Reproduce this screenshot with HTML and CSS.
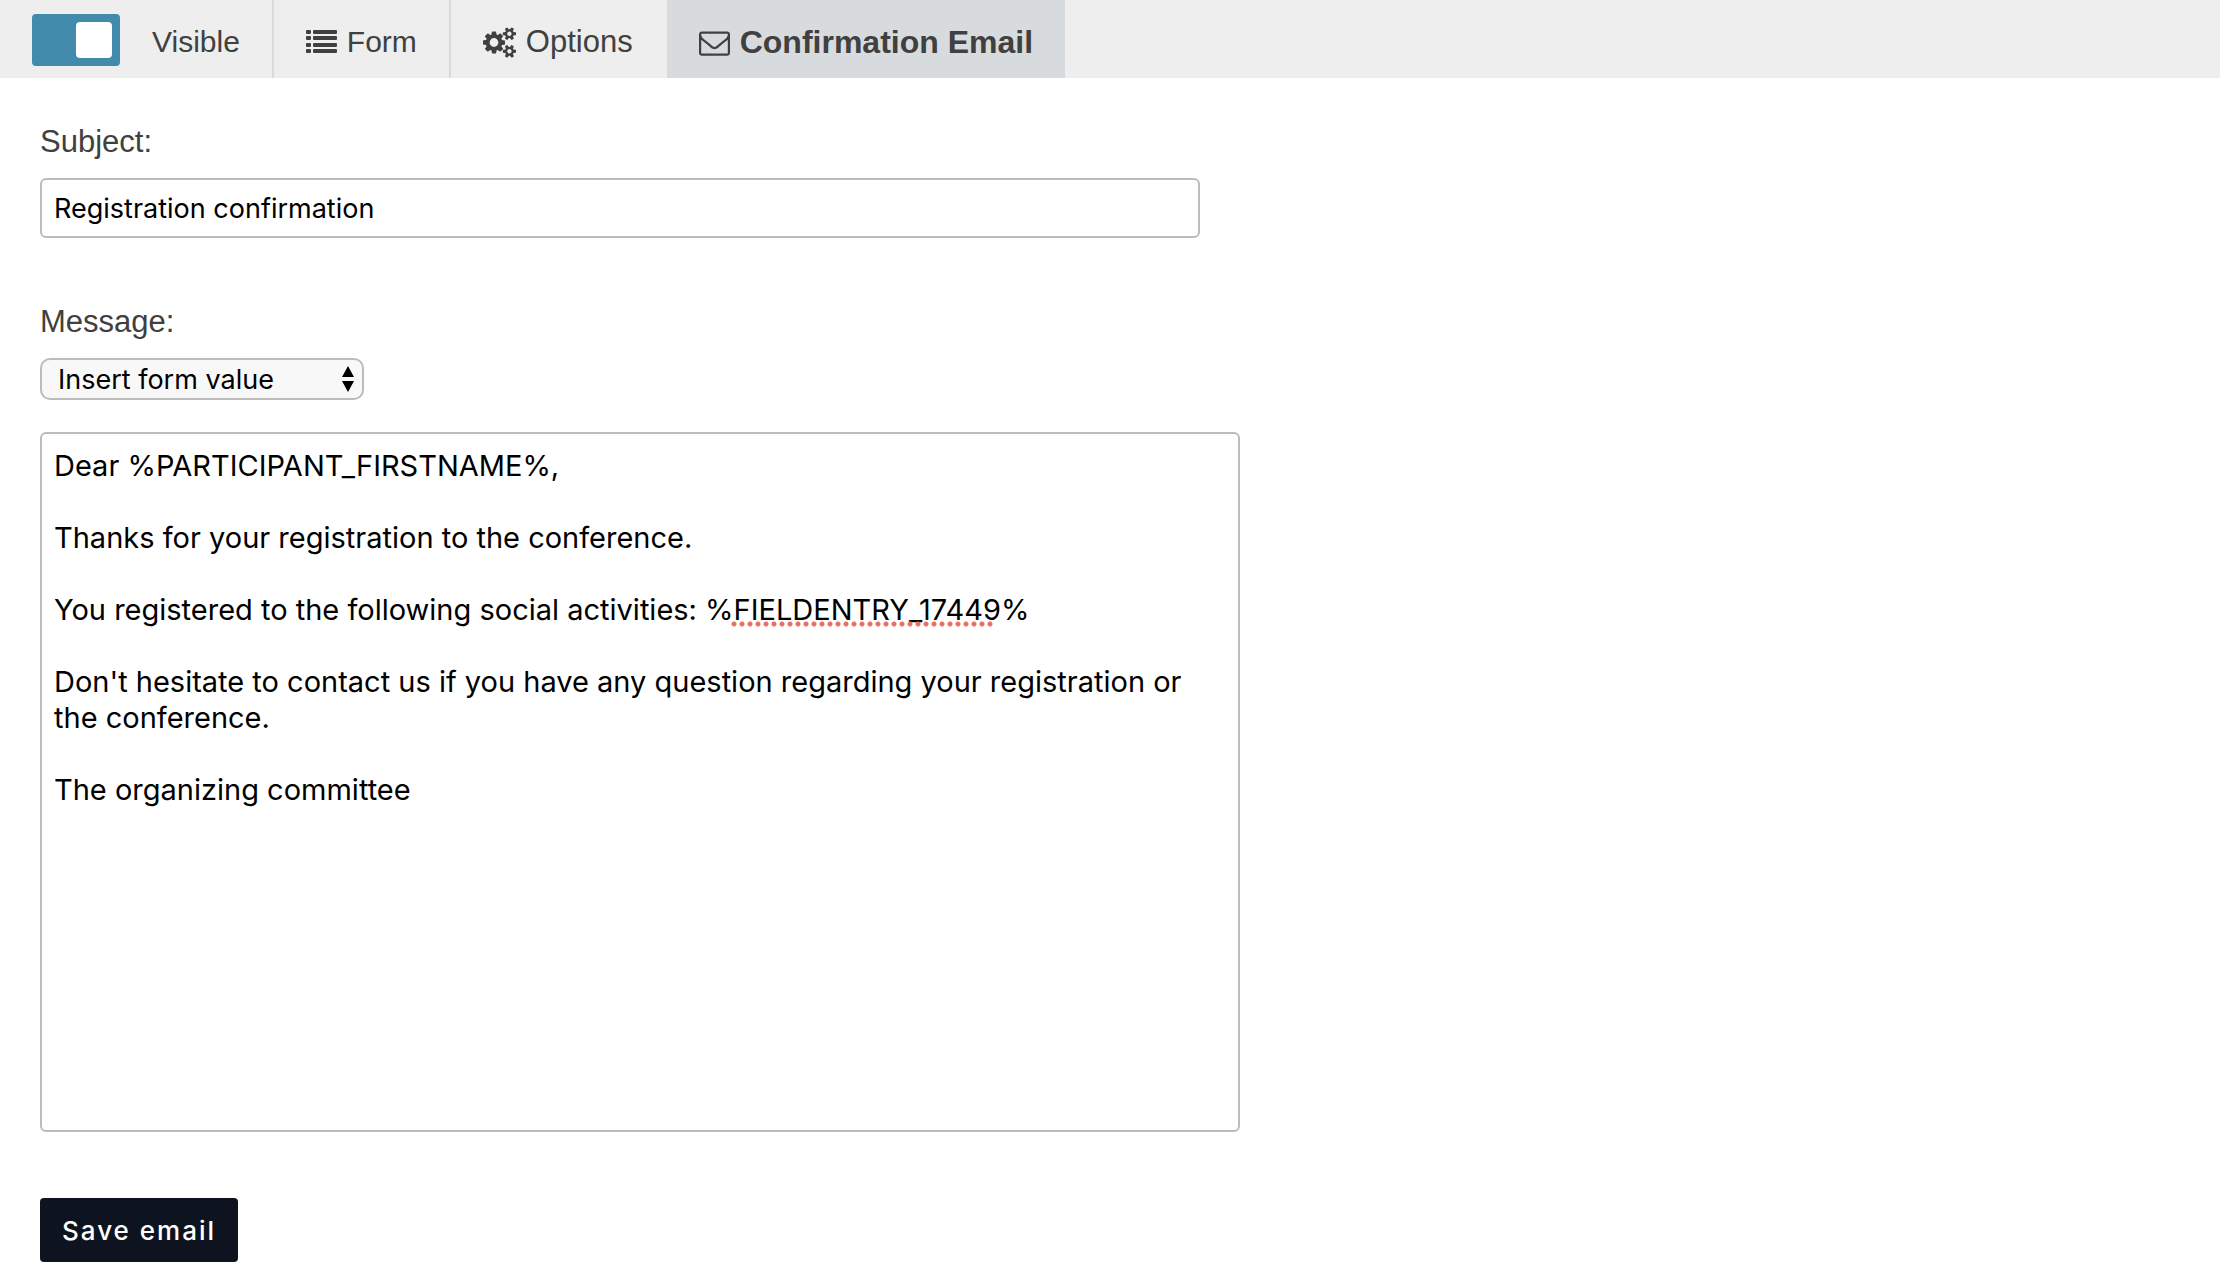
FILE: index.html
```html
<!DOCTYPE html>
<html lang="en">
<head>
<meta charset="utf-8">
<meta name="viewport" content="width=device-width, initial-scale=1">
<title>Confirmation Email</title>
<link rel="stylesheet" href="styles.css">
</head>
<body>
<nav class="toolbar">
  <label class="tab visibility">
    <input class="switch" type="checkbox" role="switch" checked>
    <span class="visibility-label">Visible</span>
  </label>
  <a class="tab" href="#form">
    <svg class="icon" viewBox="0 0 31 31" aria-hidden="true"><path d="M1 3h3q1 0 1 1v2q0 1-1 1H1q-1 0-1-1V4q0-1 1-1zm0 6h3q1 0 1 1v2q0 1-1 1H1q-1 0-1-1v-2q0-1 1-1zm0 7h3q1 0 1 1v2q0 1-1 1H1q-1 0-1-1v-2q0-1 1-1zm0 6h3q1 0 1 1v2q0 1-1 1H1q-1 0-1-1v-2q0-1 1-1zM8 3h22q1 0 1 1v2q0 1-1 1H8q-1 0-1-1V4q0-1 1-1zm0 6h22q1 0 1 1v2q0 1-1 1H8q-1 0-1-1v-2q0-1 1-1zm0 7h22q1 0 1 1v2q0 1-1 1H8q-1 0-1-1v-2q0-1 1-1zm0 6h22q1 0 1 1v2q0 1-1 1H8q-1 0-1-1v-2q0-1 1-1z"/></svg>
    <span>Form</span>
  </a>
  <a class="tab tab-before-active" href="#options">
    <svg class="icon icon-wide" viewBox="0 0 1920 1792" aria-hidden="true"><path d="M896 896q0-106-75-181t-181-75-181 75-75 181 75 181 181 75 181-75 75-181zm768 512q0-52-38-90t-90-38-90 38-38 90q0 53 37.500 90.500t90.500 37.500 90.500-37.500 37.500-90.500zm0-1024q0-52-38-90t-90-38-90 38-38 90q0 53 37.500 90.500t90.500 37.500 90.500-37.500 37.500-90.500zm-384 421v185q0 10-7 19.500t-16 10.500l-155 24q-11 35-32 76 34 48 90 115 7 11 7 20 0 12-7 19-23 30-82.500 89.500t-78.500 59.500q-11 0-21-7l-115-90q-37 19-77 31-11 108-23 155-7 24-30 24h-186q-11 0-20-7.500t-10-17.500l-23-153q-34-10-75-31l-118 89q-7 7-20 7-11 0-21-8-144-133-144-160 0-9 7-19 10-14 41-53t47-61q-23-44-35-82l-152-24q-10-1-17-9.500t-7-19.500v-185q0-10 7-19.500t16-10.500l155-24q11-35 32-76-34-48-90-115-7-11-7-20 0-12 7-20 22-30 82-89t79-59q11 0 21 7l115 90q34-18 77-32 11-108 23-154 7-24 30-24h186q11 0 20 7.500t10 17.500l23 153q34 10 75 31l118-89q8-7 20-7 11 0 21 8 144 133 144 160 0 8-7 19-12 16-42 54t-45 60q23 48 34 82l152 23q10 2 17 10.500t7 19.500zm640 533v140q0 16-149 31-12 27-30 52 51 113 51 138 0 4-4 7-122 71-124 71-8 0-46-47t-52-68q-20 2-30 2t-30-2q-14 21-52 68t-46 47q-2 0-124-71-4-3-4-7 0-25 51-138-18-25-30-52-149-15-149-31v-140q0-16 149-31 13-29 30-52-51-113-51-138 0-4 4-7 4-2 35-20t59-34 30-16q8 0 46 46.500t52 67.500q20-2 30-2t30 2q51-71 92-112l6-2q4 0 124 70 4 3 4 7 0 25-51 138 17 23 30 52 149 15 149 31zm0-1024v140q0 16-149 31-12 27-30 52 51 113 51 138 0 4-4 7-122 71-124 71-8 0-46-47t-52-68q-20 2-30 2t-30-2q-14 21-52 68t-46 47q-2 0-124-71-4-3-4-7 0-25 51-138-18-25-30-52-149-15-149-31v-140q0-16 149-31 13-29 30-52-51-113-51-138 0-4 4-7 4-2 35-20t59-34 30-16q8 0 46 46.500t52 67.500q20-2 30-2t30 2q51-71 92-112l6-2q4 0 124 70 4 3 4 7 0 25-51 138 17 23 30 52 149 15 149 31z"/></svg>
    <span>Options</span>
  </a>
  <a class="tab tab-active" href="#confirmation" aria-current="page">
    <svg class="icon" viewBox="0 0 1792 1792" aria-hidden="true"><path d="M1664 1504v-768q-32 36-69 66-268 206-426 338-51 43-83 67t-86.500 48.500-102.500 24.500h-2q-48 0-102.500-24.500t-86.500-48.500-83-67q-158-132-426-338-37-30-69-66v768q0 13 9.500 22.500t22.500 9.500h1472q13 0 22.500-9.500t9.500-22.500zm0-1051v-24.500l-.5-13-3-12.500-5.500-9-9-7.500-14-2.500h-1472q-13 0-22.500 9.500t-9.500 22.500q0 168 147 284 193 152 401 317 6 5 35 29.500t46 37.500 44.500 31.500 50.500 27.500 43 9h2q20 0 43-9t50.500-27.500 44.500-31.500 46-37.500 35-29.500q208-165 401-317 54-43 100.500-115.500t46.500-131.500zm128-37v1088q0 66-47 113t-113 47h-1472q-66 0-113-47t-47-113v-1088q0-66 47-113t113-47h1472q66 0 113 47t47 113z"/></svg>
    <span>Confirmation Email</span>
  </a>
</nav>
<main class="content">
  <form class="email-form">
    <div class="field subject">
      <label class="label" for="subject">Subject:</label>
      <input class="text-input" id="subject" type="text" value="Registration confirmation">
    </div>
    <div class="field">
      <label class="label" for="message">Message:</label>
      <div class="select-wrap">
        <select class="select" aria-label="Insert form value">
          <option>Insert form value</option>
        </select>
        <svg class="select-arrows" viewBox="0 0 14 26" aria-hidden="true"><path d="M7 0l6 11H1zM7 26l6-11H1z"/></svg>
      </div>
    </div>
    <div class="editor">
      <textarea class="message" id="message" spellcheck="false">Dear %PARTICIPANT_FIRSTNAME%,

Thanks for your registration to the conference.

You registered to the following social activities: %FIELDENTRY_17449%

Don't hesitate to contact us if you have any question regarding your registration or the conference.

The organizing committee</textarea>
      <span class="spelling-mark" aria-hidden="true"></span>
    </div>
    <button class="save" type="button">Save email</button>
  </form>
</main>
</body>
</html>
```
FILE: styles.css
```css
* {
  box-sizing: border-box;
}

body {
  margin: 0;
  background: #fff;
  color: #404040;
  font-family: "Liberation Sans", Arial, sans-serif;
  font-size: 31px;
  line-height: 36px;
}

.toolbar {
  display: flex;
  background: #eee;
}

.tab {
  display: flex;
  align-items: center;
  gap: 10px;
  padding: 24px 32px 18px;
  border-right: 2px solid #d7dbde;
  color: inherit;
  font-size: 30px;
  text-decoration: none;
  white-space: nowrap;
}

.tab-before-active {
  padding-right: 34px;
  border-right: 0;
  font-size: 31px;
}

.tab-active {
  border-right: 0;
  background: #d7dbde;
  font-size: 32px;
  font-weight: bold;
}

.visibility {
  gap: 32px;
  padding-top: 14px;
  padding-bottom: 12px;
}

.visibility-label {
  padding-top: 4px;
}

.switch {
  appearance: none;
  display: flex;
  align-items: center;
  width: 88px;
  height: 52px;
  margin: 0;
  padding: 8px;
  border-radius: 4px;
  background: #428bad;
}

.switch::before {
  content: "";
  width: 36px;
  height: 36px;
  border-radius: 4px;
  background: #fff;
}

.switch:checked {
  justify-content: flex-end;
}

.icon {
  flex: none;
  width: 31px;
  height: 31px;
  fill: currentColor;
}

.icon-wide {
  width: 33px;
}

.content {
  padding: 46px 40px 24px;
}

.email-form {
  display: flex;
  flex-direction: column;
  align-items: flex-start;
  max-width: 1200px;
}

.field {
  display: flex;
  flex-direction: column;
  gap: 18px;
  width: 100%;
}

.subject {
  max-width: 1160px;
  margin-bottom: 66px;
}

.text-input,
.message,
.select {
  width: 100%;
  margin: 0;
  border: 2px solid #bcbcbc;
  border-radius: 6px;
  background: #fff;
  color: #000;
  font-family: Inter, "Liberation Sans", sans-serif;
}

.text-input {
  height: 60px;
  padding: 0 12px;
  font-size: 27px;
}

.select-wrap {
  position: relative;
  width: 324px;
}

.select {
  display: block;
  appearance: none;
  height: 42px;
  padding: 0 16px;
  border-radius: 10px;
  background: #f8f8f8;
  font-size: 27px;
}

.select-arrows {
  position: absolute;
  top: 8px;
  right: 9px;
  width: 14px;
  height: 26px;
  pointer-events: none;
}

.editor {
  position: relative;
  width: 100%;
  margin: 32px 0 66px;
}

.message {
  display: block;
  height: 700px;
  padding: 14px 12px;
  font-size: 29px;
  line-height: 36px;
  resize: none;
}

.spelling-mark {
  position: absolute;
  top: 189px;
  left: 690px;
  width: 264px;
  height: 6px;
  background: radial-gradient(circle, #ee6e64 2px, transparent 3px) 0 0 / 8px 6px;
  pointer-events: none;
}

.save {
  height: 64px;
  padding: 0 22px;
  border: 0;
  border-radius: 4px;
  background: #0e141f;
  color: #fff;
  font: 500 26px Inter, "Liberation Sans", sans-serif;
  letter-spacing: 2px;
}
```
